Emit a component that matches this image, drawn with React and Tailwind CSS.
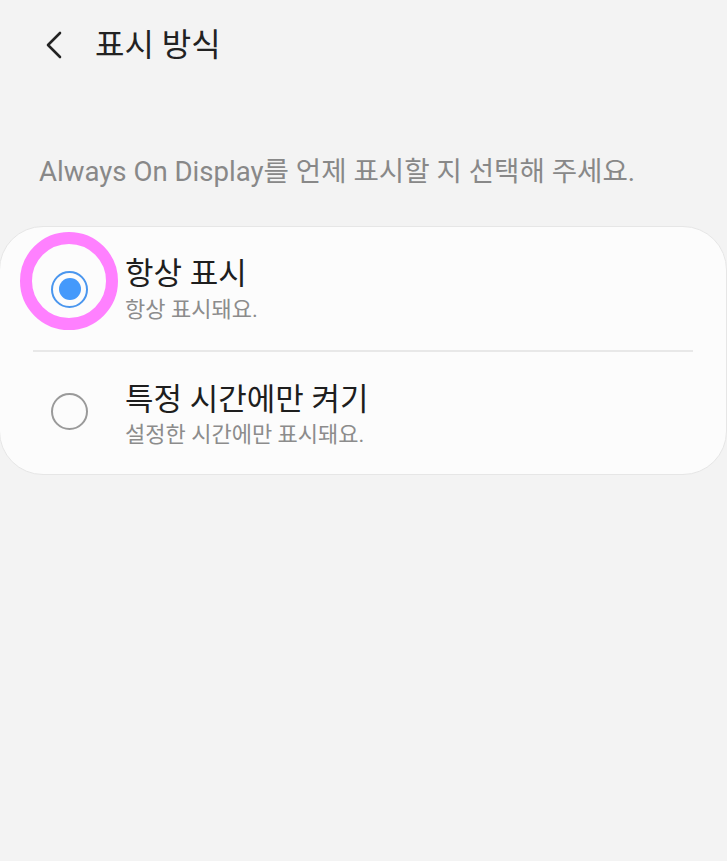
export default function App() {
  const font = { fontFamily: 'Roboto, "Noto Sans CJK KR", sans-serif' };
  return (
    <div className="w-[727px] h-[861px] bg-[#f3f3f3] overflow-hidden" style={font}>
      <div className="h-[88px] flex items-center">
        <div className="w-[95px] flex items-center pl-[41px] pt-[1px]">
          <svg width="26" height="32" viewBox="0 0 26 32">
            <path d="M19 4 L7 16 L19 28" fill="none" stroke="#222" strokeWidth="2.6" strokeLinecap="round" strokeLinejoin="round" />
          </svg>
        </div>
        <div className="text-[32px] leading-none text-[#222] pt-[1px]">표시 방식</div>
      </div>
      <div className="pt-[70px] pl-[39px] text-[27.6px] leading-none text-[#888]">
        Always On Display를 언제 표시할 지 선택해 주세요.
      </div>
      <div className="mt-[40px] ml-[-1px] w-[728px] h-[249px] bg-[#fcfcfc] border border-[#e6e6e6] rounded-[44px] flex flex-col">
        <div className="relative flex items-center h-[123px]">
          <div className="absolute left-[20px] top-[5px] w-[98px] h-[98px] rounded-full border-[12px] border-[#ff80ff]" />
          <div className="w-[125px] flex justify-center pl-[14px] pt-[2px]">
            <div className="w-[37px] h-[37px] rounded-full border-[2px] border-[#4a96ee] flex items-center justify-center">
              <div className="w-[22px] h-[22px] rounded-full bg-[#4499fb]" />
            </div>
          </div>
          <div className="flex flex-col pt-[2px]">
            <div className="text-[31px] leading-none text-[#1e1e1e]">항상 표시</div>
            <div className="text-[22px] leading-none text-[#8c8c8c] mt-[10px]">항상 표시돼요.</div>
          </div>
        </div>
        <div className="h-[2px] bg-[#e8e8e8] ml-[33px] mr-[33px]" />
        <div className="flex items-center flex-1 pt-[4px]">
          <div className="w-[125px] flex justify-center pl-[14px] pb-[7px]">
            <div className="w-[37px] h-[37px] rounded-full border-[2px] border-[#9a9a9a]" />
          </div>
          <div className="flex flex-col">
            <div className="text-[31px] leading-none text-[#1e1e1e]">특정 시간에만 켜기</div>
            <div className="text-[22px] leading-none text-[#8c8c8c] mt-[9px]">설정한 시간에만 표시돼요.</div>
          </div>
        </div>
      </div>
    </div>
  );
}
